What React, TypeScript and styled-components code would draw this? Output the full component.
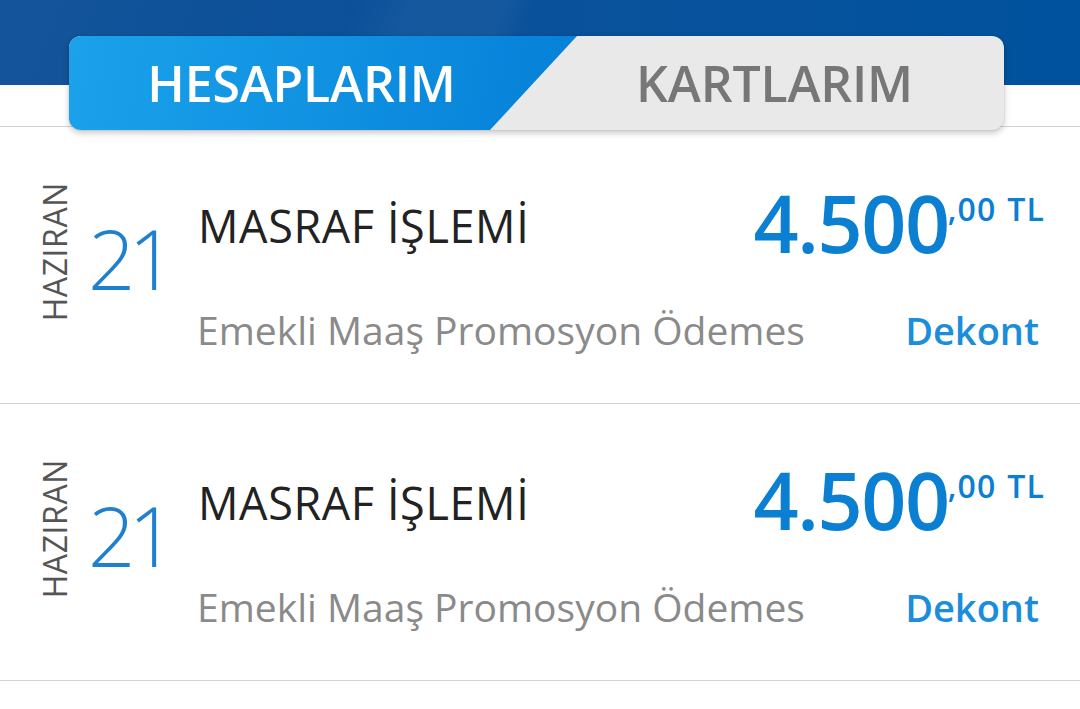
import React from "react";
import styled, { createGlobalStyle } from "styled-components";

const GlobalStyle = createGlobalStyle`
  html, body {
    margin: 0;
    padding: 0;
    background: #ffffff;
  }
  body {
    font-family: "Open Sans", "DejaVu Sans", sans-serif;
    -webkit-font-smoothing: antialiased;
  }
`;

const Page = styled.div`
  width: 1080px;
  height: 709px;
  overflow: hidden;
  background: #ffffff;
`;

const Header = styled.header`
  height: 127px;
  box-sizing: border-box;
  padding: 36px 0 0 69px;
  border-bottom: 1px solid #d2d2d2;
  background-color: #ffffff;
  background-image: linear-gradient(
      112deg,
      rgba(255, 255, 255, 0.03) 0px,
      rgba(255, 255, 255, 0) 330px,
      rgba(255, 255, 255, 0.045) 385px,
      rgba(255, 255, 255, 0.045) 470px,
      rgba(255, 255, 255, 0) 495px
    ),
    linear-gradient(90deg, #0d4f97 0%, #0a519b 50%, #00529e 100%);
  background-size: 100% 85px, 100% 85px;
  background-repeat: no-repeat;
`;

const TabBar = styled.nav`
  position: relative;
  z-index: 1;
  display: flex;
  width: 935px;
  height: 94px;
  border-radius: 12px;
  background: #e9e9e9;
  box-shadow: 0 3px 6px rgba(0, 0, 0, 0.22), 0 0 0 1px rgba(0, 0, 0, 0.04);
  overflow: hidden;
`;

const Tab = styled.div<{ $active?: boolean }>`
  display: flex;
  align-items: center;
  justify-content: center;
  font-size: 50px;
  font-weight: 600;
  letter-spacing: -0.2px;
  color: ${(p) => (p.$active ? "#ffffff" : "#777777")};
  ${(p) =>
    p.$active
      ? `
    width: 508px;
    flex: none;
    box-sizing: border-box;
    padding-right: 43px;
    background: linear-gradient(100deg, #1ba2eb 0%, #1193e2 45%, #0580d8 100%);
    clip-path: polygon(0 0, 100% 0, calc(100% - 87px) 100%, 0 100%);
  `
      : `
    flex: 1;
    margin-left: -32px;
  `}
`;

const Row = styled.div`
  display: flex;
  height: 276px;
  border-bottom: 1px solid #d2d2d2;
`;

const DateBlock = styled.div`
  display: flex;
  align-items: flex-start;
  width: 197px;
  flex: none;
  padding-left: 39px;
  box-sizing: border-box;
`;

const Month = styled.span`
  margin-top: 55px;
  writing-mode: vertical-rl;
  transform: rotate(180deg);
  font-size: 32px;
  line-height: 1;
  color: #555555;
  letter-spacing: 0.6px;
`;

const Day = styled.span`
  margin: 89px 0 0 17px;
  font-size: 83px;
  font-weight: 300;
  line-height: 1;
  letter-spacing: -7px;
  color: #1f80cf;
`;

const Content = styled.div`
  flex: 1;
  display: flex;
  flex-direction: column;
  padding-right: 35px;
`;

const TopLine = styled.div`
  display: flex;
  justify-content: space-between;
  align-items: flex-start;
  height: 136px;
`;

const Title = styled.span`
  margin: 76px 0 0 1px;
  font-size: 45px;
  line-height: 1;
  letter-spacing: 0.6px;
  color: #222222;
`;

const Amount = styled.div`
  display: flex;
  align-items: flex-start;
  margin-top: 56px;
  color: #0b7fd1;
  font-weight: 600;
`;

const Whole = styled.span`
  font-size: 79px;
  line-height: 1;
  letter-spacing: -1.4px;
`;

const Fraction = styled.span`
  margin: 10px 0 0 -1px;
  font-size: 32px;
  line-height: 1;
  letter-spacing: 1.2px;
  word-spacing: 1px;
`;

const BottomLine = styled.div`
  display: flex;
  justify-content: space-between;
  align-items: baseline;
  margin-top: 47px;
`;

const Description = styled.span`
  font-size: 39px;
  line-height: 1;
  color: #8a8a8a;
  white-space: nowrap;
`;

const Receipt = styled.span`
  margin-right: 6px;
  font-size: 38px;
  font-weight: 600;
  line-height: 1;
  color: #1a8ddb;
`;

type Transaction = {
  month: string;
  day: string;
  title: string;
  desc: string;
  whole: string;
  fraction: string;
};

const transactions: Transaction[] = [
  {
    month: "HAZIRAN",
    day: "21",
    title: "MASRAF İŞLEMİ",
    desc: "Emekli Maaş Promosyon Ödemes",
    whole: "4.500",
    fraction: ",00 TL",
  },
  {
    month: "HAZIRAN",
    day: "21",
    title: "MASRAF İŞLEMİ",
    desc: "Emekli Maaş Promosyon Ödemes",
    whole: "4.500",
    fraction: ",00 TL",
  },
];

const App: React.FC = () => {
  return (
    <Page>
      <GlobalStyle />
      <Header>
        <TabBar>
          <Tab $active>HESAPLARIM</Tab>
          <Tab>KARTLARIM</Tab>
        </TabBar>
      </Header>

      {transactions.map((t, i) => (
        <Row key={i}>
          <DateBlock>
            <Month>{t.month}</Month>
            <Day>{t.day}</Day>
          </DateBlock>
          <Content>
            <TopLine>
              <Title>{t.title}</Title>
              <Amount>
                <Whole>{t.whole}</Whole>
                <Fraction>{t.fraction}</Fraction>
              </Amount>
            </TopLine>
            <BottomLine>
              <Description>{t.desc}</Description>
              <Receipt>Dekont</Receipt>
            </BottomLine>
          </Content>
        </Row>
      ))}
    </Page>
  );
};

export default App;
